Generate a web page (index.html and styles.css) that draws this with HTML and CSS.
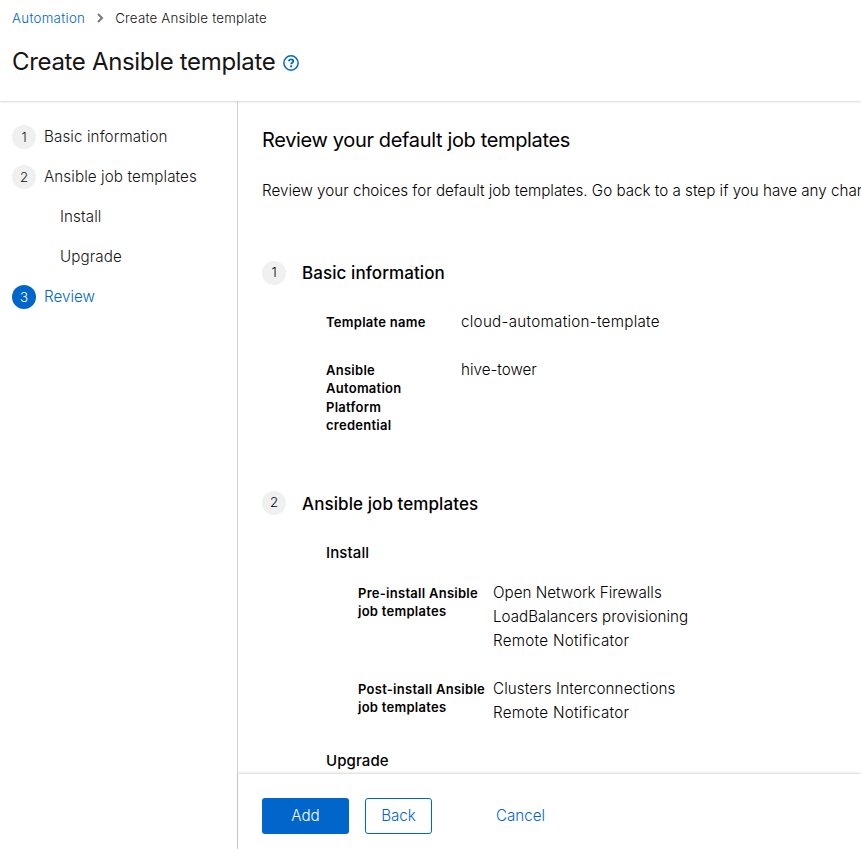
FILE: index.html
```html
<!DOCTYPE html>
<html lang="en">
<head>
<meta charset="utf-8">
<title>Create Ansible template</title>
<link rel="stylesheet" href="styles.css">
</head>
<body>
<div class="page">
  <header class="header">
    <nav class="breadcrumb">
      <a class="crumb-link" href="#">Automation</a>
      <svg class="chevron" viewBox="0 0 8 10" width="8" height="10"><path d="M2 1l4 4-4 4" fill="none" stroke="#75797d" stroke-width="2"/></svg>
      <span class="crumb-current">Create Ansible template</span>
    </nav>
    <div class="title-row">
      <h1 class="title">Create Ansible template</h1>
      <svg class="help" viewBox="0 0 16 16" width="16" height="16" fill="none" stroke="#06c"><circle cx="8" cy="8" r="7.15" stroke-width="1.5"/><path d="M5.7 6.3C6 5 6.9 4.4 8.1 4.4c1.2 0 2.1.7 2.1 1.8 0 1.4-2 1.5-2 3" stroke-width="1.9"/><circle cx="8.1" cy="11.3" r="1.15" fill="#06c" stroke="none"/></svg>
    </div>
  </header>
  <div class="wizard">
    <nav class="steps">
      <div class="step"><span class="num">1</span><span class="spaced">Basic information</span></div>
      <div class="step"><span class="num">2</span><span class="spaced">Ansible job templates</span></div>
      <div class="step sub"><span class="spaced">Install</span></div>
      <div class="step sub"><span class="spaced">Upgrade</span></div>
      <div class="step current"><span class="num">3</span><span>Review</span></div>
    </nav>
    <div class="panel">
      <main class="content">
        <h2 class="heading">Review your default job templates</h2>
        <p class="intro">Review your choices for default job templates. Go back to a step if you have any changes.</p>
        <section class="section">
          <div class="section-head"><span class="num">1</span><h3 class="section-title">Basic information</h3></div>
          <dl class="list">
            <div class="row"><dt>Template name</dt><dd class="wide">cloud-automation-template</dd></div>
            <div class="row"><dt>Ansible<br>Automation<br>Platform<br>credential</dt><dd>hive-tower</dd></div>
          </dl>
        </section>
        <section class="section second">
          <div class="section-head"><span class="num">2</span><h3 class="section-title">Ansible job templates</h3></div>
          <h4 class="group">Install</h4>
          <dl class="list nested">
            <div class="row"><dt>Pre-install Ansible<br>job templates</dt><dd>Open Network Firewalls<br>LoadBalancers provisioning<br><span class="wide">Remote Notificator</span></dd></div>
            <div class="row"><dt>Post-install Ansible<br>job templates</dt><dd><span class="spaced">Clusters Interconnections</span><br><span class="wide">Remote Notificator</span></dd></div>
          </dl>
          <h4 class="group">Upgrade</h4>
        </section>
      </main>
      <footer class="footer">
        <button class="btn primary">Add</button>
        <button class="btn secondary">Back</button>
        <button class="btn link">Cancel</button>
      </footer>
    </div>
  </div>
</div>
</body>
</html>
```
FILE: styles.css
```css
* { box-sizing: border-box; }
body, h1, h2, h3, h4, p, dl, dd { margin: 0; }
body {
  font: 300 15.2px/24px Inter, "Liberation Sans", sans-serif;
  color: #151515;
  background: #fff;
}
.spaced { letter-spacing: .1px; }
.wide { letter-spacing: .28px; }
.page { display: flex; flex-direction: column; height: 849px; overflow: hidden; }
.header {
  flex: none;
  height: 101px;
  padding: 7px 12px 0;
  position: relative;
  z-index: 2;
  background: #fff;
  box-shadow: 0 1px 2px rgba(3,3,3,.12), 0 0 2px rgba(3,3,3,.1);
}
.breadcrumb { display: flex; align-items: center; height: 21px; font-size: 13.3px; }
.crumb-link { color: #06c; text-decoration: none; letter-spacing: .3px; }
.crumb-current { letter-spacing: .2px; }
.chevron { margin: 0 11px; }
.title-row { display: flex; align-items: center; margin-top: 17px; height: 34px; }
.title { font-size: 24px; font-weight: 400; line-height: 34px; letter-spacing: -.33px; white-space: nowrap; }
.help { margin: 2px 0 0 8px; }
.wizard { display: flex; flex: 1; min-height: 0; }
.steps { flex: none; width: 238px; padding: 24px 12px; border-right: 1px solid #d2d2d2; }
.step { display: flex; align-items: center; height: 24px; margin-bottom: 16px; white-space: nowrap; }
.sub { padding-left: 48px; }
.num {
  flex: none;
  width: 24px;
  height: 24px;
  border-radius: 50%;
  background: #f0f0f0;
  font-size: 13.3px;
  line-height: 24px;
  text-align: center;
}
.step .num { margin-right: 8px; }
.current { color: #06c; }
.current .num { background: #06c; color: #fff; }
.panel { flex: 1; min-width: 0; display: flex; flex-direction: column; }
.content { flex: 1; min-height: 0; overflow: hidden; padding: 24px 0 0 24px; white-space: nowrap; color: #000; }
.heading { font-size: 20px; line-height: 30px; font-weight: 400; letter-spacing: -.35px; }
.intro { margin-top: 24px; }
.section { margin-top: 56px; }
.section-head { display: flex; align-items: flex-start; height: 27px; }
.section-head .num { margin-top: 2px; line-height: 23px; }
.second .num { margin-top: 1px; }
.section-title { margin: 1px 0 0 16px; font-size: 17px; font-weight: 500; line-height: 27px; letter-spacing: .08px; }
.list { display: flex; flex-direction: column; gap: 24px; padding: 24px 0 0 64px; }
.row { display: flex; }
dt { flex: none; width: 135px; font-size: 13px; line-height: 18.3px; font-weight: 600; letter-spacing: .27px; padding-top: 3px; }
.group { margin: 24px 0 0 64px; font-size: 15px; font-weight: 500; line-height: 24px; letter-spacing: .1px; }
.nested { padding: 16px 0 0 96px; }
.footer {
  flex: none;
  display: flex;
  height: 75px;
  padding: 24px 0 0 24px;
  position: relative;
  background: #fff;
  box-shadow: 0 -1px 2px rgba(3,3,3,.16);
}
.btn { height: 36px; padding: 0; border: 0; border-radius: 3px; background: none; font: inherit; color: #06c; }
.primary { width: 87px; background: #06c; color: #fff; }
.secondary { width: 67px; margin-left: 16px; border: 1px solid #06c; }
.link { width: 81px; margin-left: 48px; }
```
